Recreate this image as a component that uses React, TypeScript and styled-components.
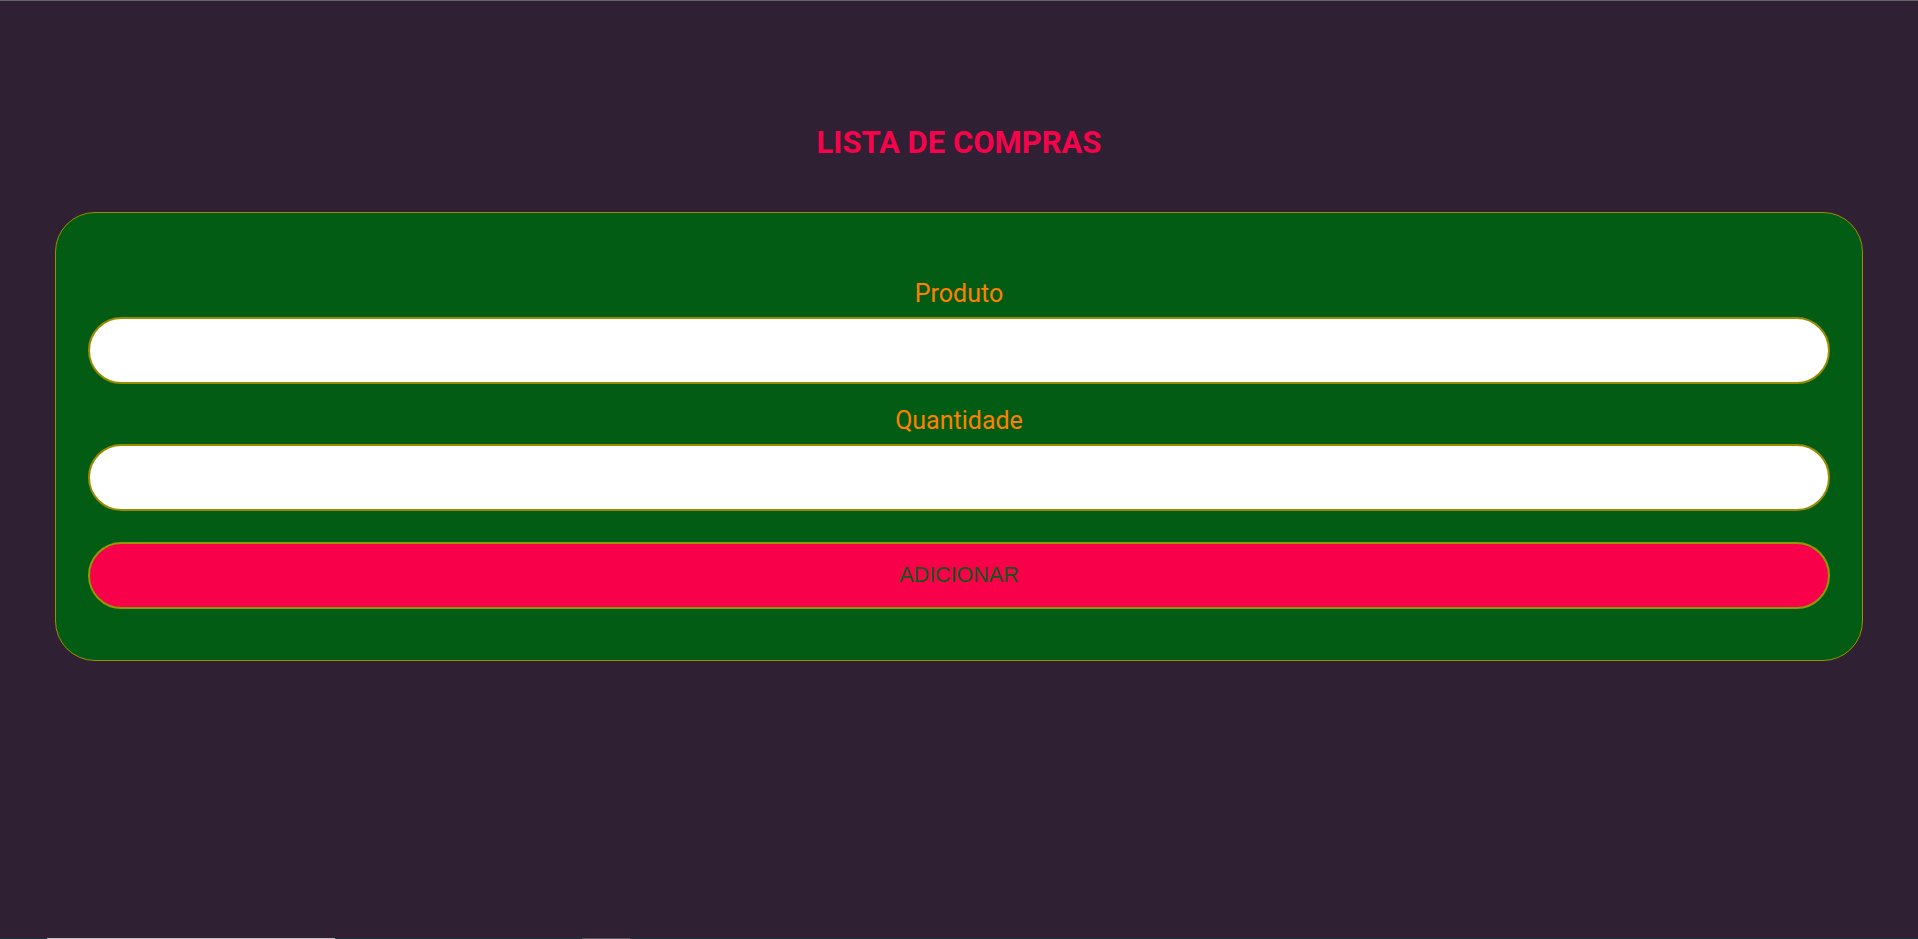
import React, { useState } from 'react'
import styled, { createGlobalStyle } from 'styled-components'

const GlobalStyle = createGlobalStyle`
  * {
    box-sizing: border-box;
  }
  html, body {
    margin: 0;
    padding: 0;
    background-color: #2f2034;
  }
  body {
    border-top: 1px solid #646464;
    font-family: Roboto, 'Liberation Sans', sans-serif;
    overflow: hidden;
  }
`

const Page = styled.div`
  min-height: 939px;
  display: flex;
  flex-direction: column;
  padding: 123px 55px 0 55px;
`

const Title = styled.h1`
  margin: 0 0 51px 0;
  text-align: center;
  font-family: Roboto, sans-serif;
  font-size: 31px;
  font-weight: 700;
  color: #f5034b;
`

const Form = styled.form`
  display: flex;
  flex-direction: column;
  background-color: #035c14;
  border: 1px solid #9a8c00;
  border-radius: 40px;
  padding: 66px 32px 51px 32px;
`

const Label = styled.label<{ spaced?: boolean }>`
  display: block;
  text-align: center;
  font-family: Roboto, sans-serif;
  font-size: 25px;
  color: #ff8000;
  margin: ${({ spaced }) => (spaced ? '22px' : '0')} 0 9px 0;
`

const Input = styled.input`
  width: 100%;
  height: 67px;
  background-color: #ffffff;
  border: 2px solid #9a8c00;
  border-radius: 34px;
  padding: 0 30px;
  font-size: 20px;
  outline: none;
`

const AddButton = styled.button`
  width: 100%;
  height: 67px;
  margin-top: 31px;
  background-color: #f8004a;
  border: 2px solid #8f9a00;
  border-radius: 34px;
  color: #0b5a16;
  font-family: 'Liberation Sans', Arial, sans-serif;
  font-size: 21.5px;
  cursor: pointer;
`

const ListArea = styled.div`
  margin: 277px -55px 0 -55px;
  height: 40px;
  background-color: #1d2f38;
  display: flex;
  align-items: flex-start;
  padding-left: 47px;
  gap: 247px;
`

const ListCell = styled.div<{ w: number; light?: boolean }>`
  width: ${({ w }) => w}px;
  height: 30px;
  background-color: ${({ light }) => (light ? '#c9bfc9' : '#555b62')};
`

export default function App() {
  const [produto, setProduto] = useState('')
  const [quantidade, setQuantidade] = useState('')

  return (
    <>
      <GlobalStyle />
      <Page>
        <Title>LISTA DE COMPRAS</Title>
        <Form onSubmit={(e) => e.preventDefault()}>
          <Label htmlFor="produto">Produto</Label>
          <Input id="produto" value={produto} onChange={(e) => setProduto(e.target.value)} />
          <Label htmlFor="quantidade" spaced>Quantidade</Label>
          <Input id="quantidade" value={quantidade} onChange={(e) => setQuantidade(e.target.value)} />
          <AddButton type="submit">ADICIONAR</AddButton>
        </Form>
        <ListArea>
          <ListCell w={288} light />
          <ListCell w={48} />
        </ListArea>
      </Page>
    </>
  )
}
